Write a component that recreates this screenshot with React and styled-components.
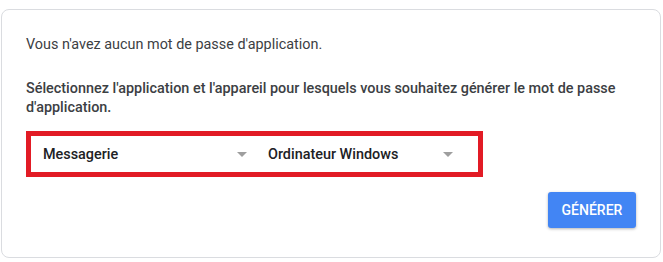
import React from 'react';
import styled, { createGlobalStyle } from 'styled-components';

const GlobalStyle = createGlobalStyle`
  body {
    margin: 0;
    background: #ffffff;
    font-family: Roboto, "Liberation Sans", Arial, sans-serif;
  }
`;

const Page = styled.div`
  padding: 9px 2px 4px 1px;
`;

const Card = styled.div`
  border: 1px solid #dadce0;
  border-radius: 8px;
  padding: 25px 24px 29px 24px;
  height: 249px;
  box-sizing: border-box;
  display: flex;
  flex-direction: column;
`;

const Text = styled.p`
  margin: 0 0 ${p => p.gap || 0}px 0;
  font-size: 14.4px;
  line-height: 19px;
  color: #3c4043;
  font-weight: ${p => (p.strong ? 500 : 400)};
`;

// encadré rouge autour des deux listes
const Highlight = styled.div`
  margin-top: 14px;
  border: 5px solid #e21b25;
  height: 46px;
  width: 457px;
  box-sizing: border-box;
  display: flex;
  align-items: center;
  padding-left: 12px;
  gap: 21px;
`;

const Select = styled.div`
  width: ${p => p.width}px;
  display: flex;
  align-items: center;
  justify-content: space-between;
  font-size: 14.4px;
  font-weight: 500;
  color: #202124;
`;

const Arrow = styled.span`
  width: 0;
  height: 0;
  border-left: 5.5px solid transparent;
  border-right: 5.5px solid transparent;
  border-top: 5px solid #9e9e9e;
`;

const Footer = styled.div`
  margin-top: auto;
  display: flex;
  justify-content: flex-end;
`;

const Button = styled.button`
  width: 88px;
  height: 36px;
  border: none;
  border-radius: 3px;
  background: #4285f4;
  color: #ffffff;
  font-family: Roboto, "Liberation Sans", Arial, sans-serif;
  font-size: 14px;
  font-weight: 500;
  box-shadow: 0 1px 3px rgba(0, 0, 0, 0.3);
  cursor: pointer;
`;

export default function App() {
  return (
    <Page>
      <GlobalStyle />
      <Card>
        <Text gap={25}>Vous n'avez aucun mot de passe d'application.</Text>
        <Text strong>
          Sélectionnez l'application et l'appareil pour lesquels vous souhaitez générer le mot de passe
          d'application.
        </Text>
        <Highlight>
          <Select width={204}>
            Messagerie
            <Arrow />
          </Select>
          <Select width={185}>
            Ordinateur Windows
            <Arrow />
          </Select>
        </Highlight>
        <Footer>
          <Button>GÉNÉRER</Button>
        </Footer>
      </Card>
    </Page>
  );
}
